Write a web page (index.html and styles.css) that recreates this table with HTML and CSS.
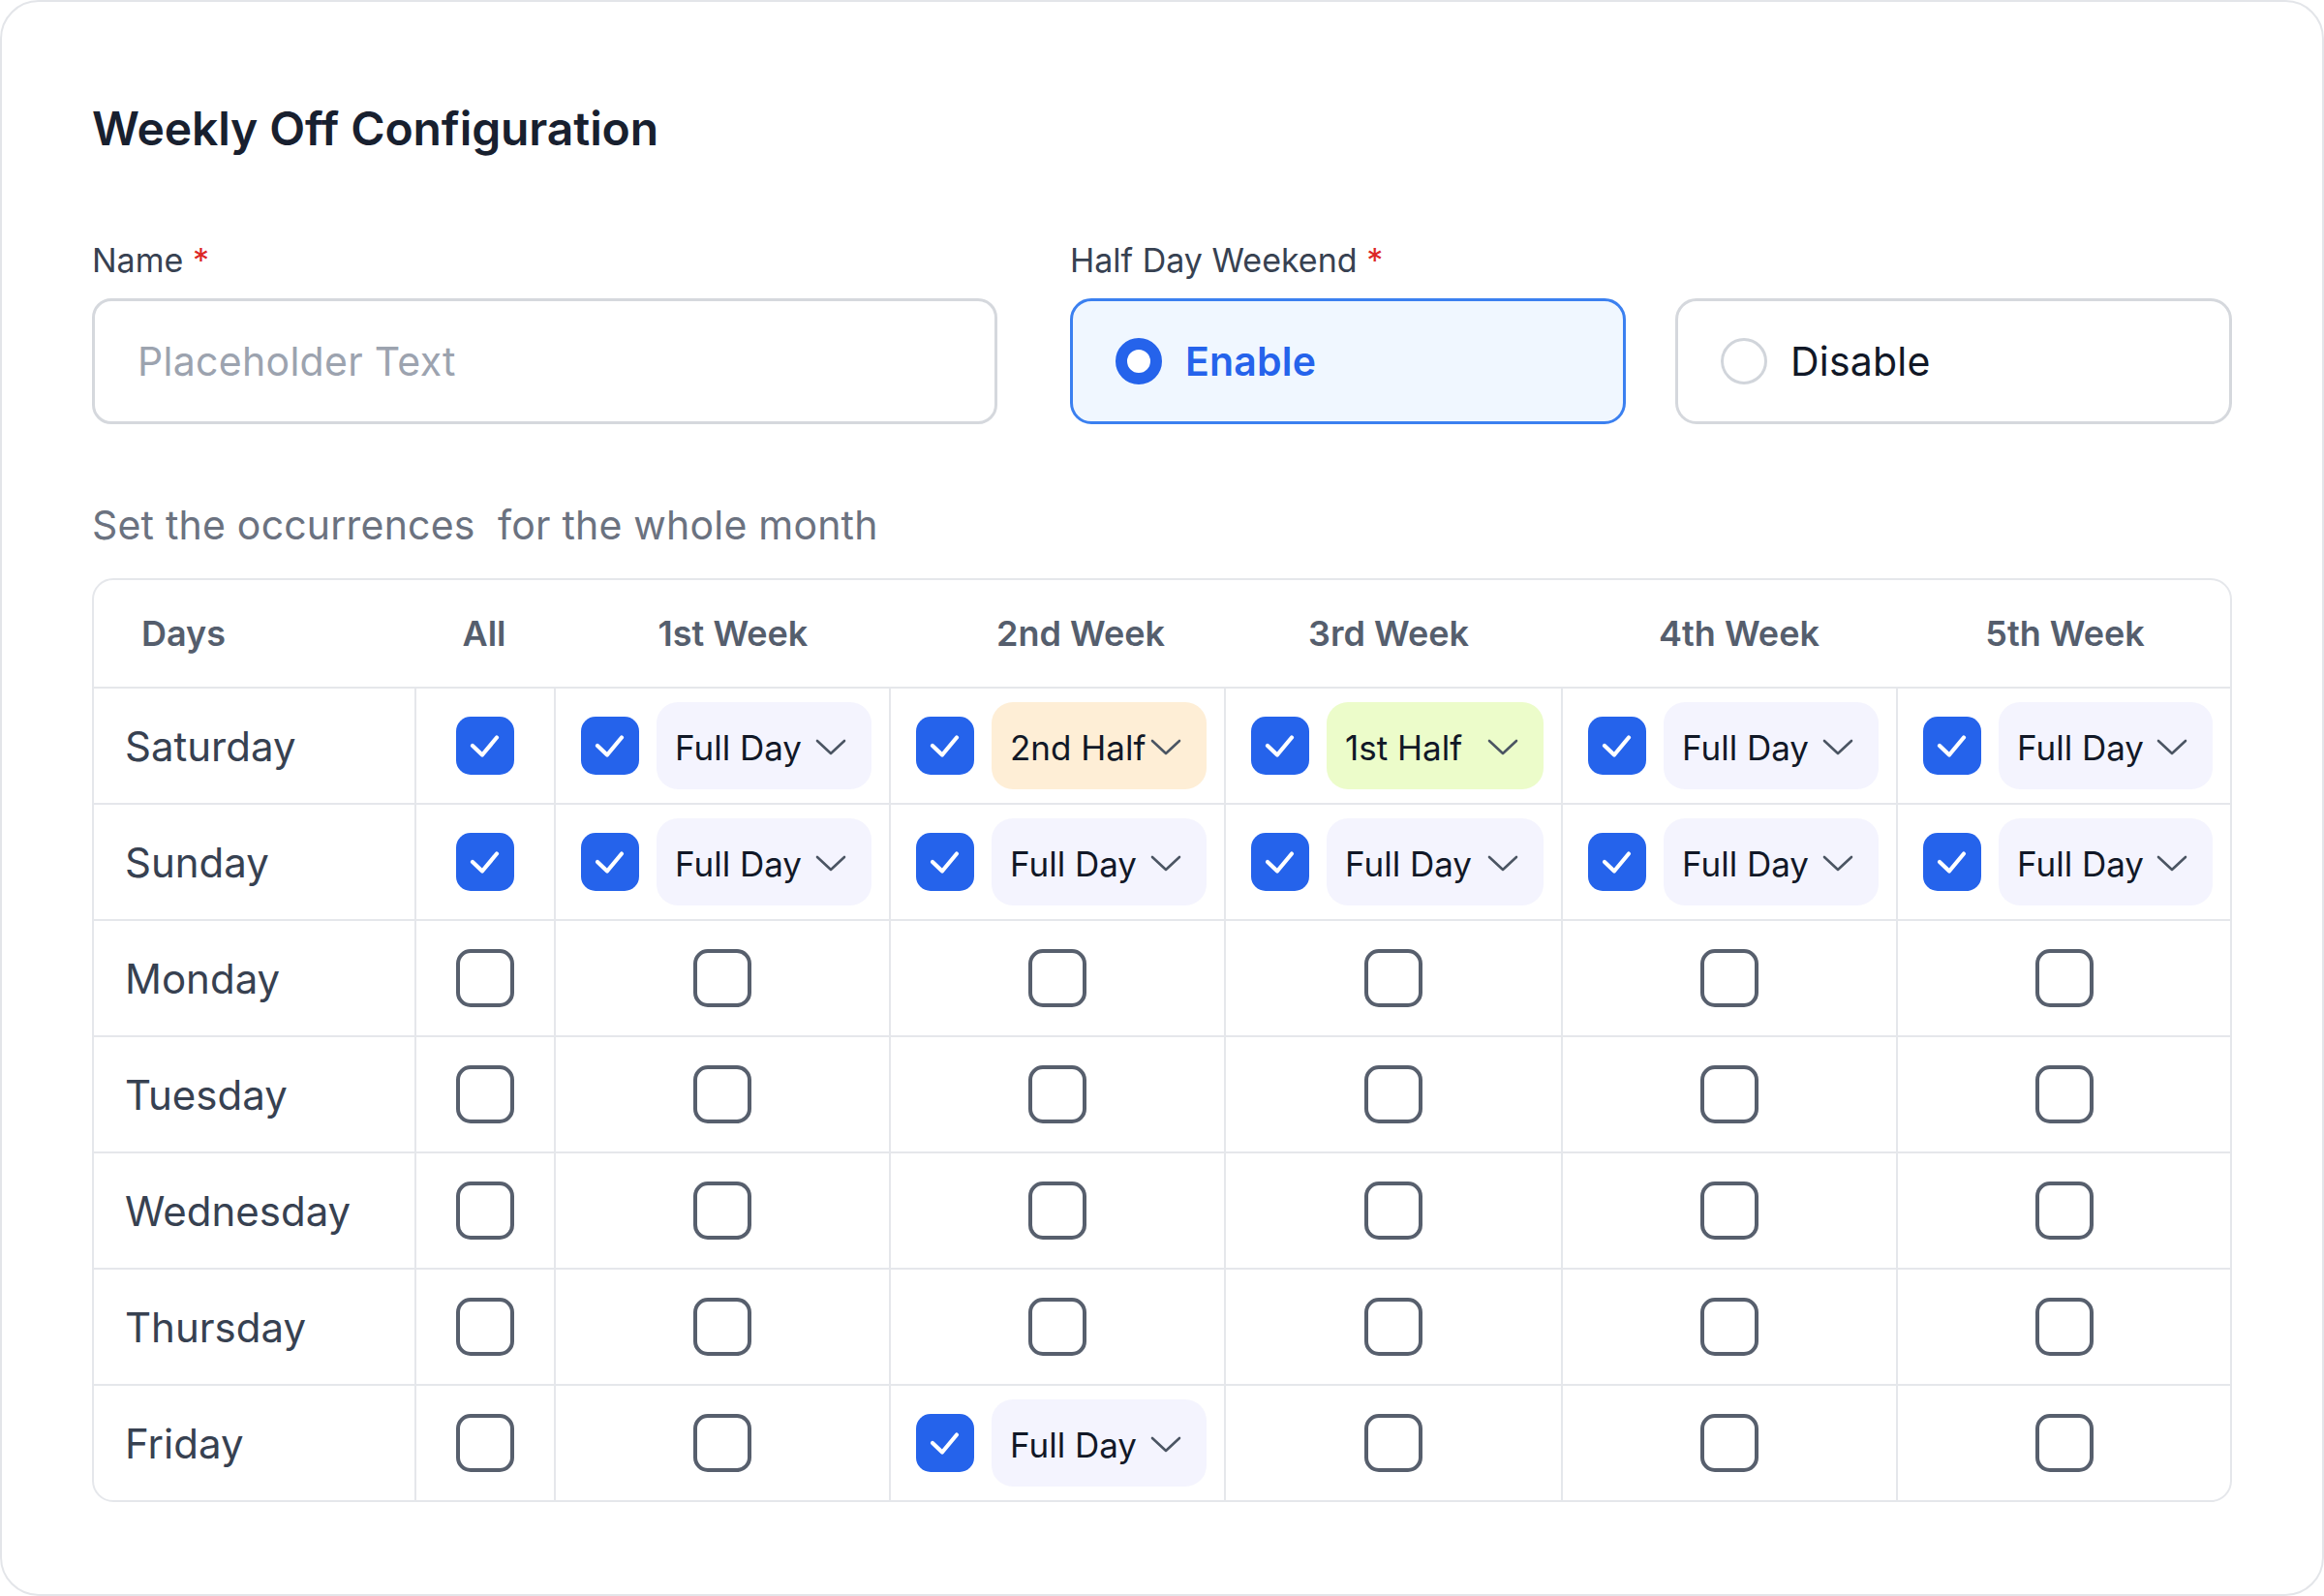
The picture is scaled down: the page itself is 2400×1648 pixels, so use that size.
FILE: index.html
```html
<!DOCTYPE html>
<html lang="en">
<head>
<meta charset="utf-8">
<title>Weekly Off Configuration</title>
<link rel="stylesheet" href="styles.css">
</head>
<body>
<div class="card">
  <h1 class="title">Weekly Off Configuration</h1>

  <div class="form-row">
    <div class="field">
      <div class="label">Name <span class="req">*</span></div>
      <input class="input" type="text" placeholder="Placeholder Text">
    </div>
    <div class="field">
      <div class="label">Half Day Weekend <span class="req">*</span></div>
      <div class="radios">
        <label class="radio-box selected"><span class="radio on"></span><span class="radio-text">Enable</span></label>
        <label class="radio-box"><span class="radio"></span><span class="radio-text">Disable</span></label>
      </div>
    </div>
  </div>

  <p class="hint">Set the occurrences&nbsp; for the whole month</p>

  <div class="table">
    <div class="thead">
      <div class="th th-days">Days</div>
      <div class="th">All</div>
      <div class="th th-w1">1st Week</div>
      <div class="th th-w2">2nd Week</div>
      <div class="th th-w3">3rd Week</div>
      <div class="th th-w4">4th Week</div>
      <div class="th th-w5">5th Week</div>
    </div>

    <div class="tr">
      <div class="td day">Saturday</div>
      <div class="td center"><span class="cb checked"><svg viewBox="0 0 60 60"><path d="M17 30 L27 39.5 L42 21.5"/></svg></span></div>
      <div class="td week"><span class="cb checked"><svg viewBox="0 0 60 60"><path d="M17 30 L27 39.5 L42 21.5"/></svg></span><span class="pill"><span>Full Day</span><svg class="chev" viewBox="0 0 32 18"><path d="M2 2 L16 15 L30 2"/></svg></span></div>
      <div class="td week"><span class="cb checked"><svg viewBox="0 0 60 60"><path d="M17 30 L27 39.5 L42 21.5"/></svg></span><span class="pill peach"><span>2nd Half</span><svg class="chev" viewBox="0 0 32 18"><path d="M2 2 L16 15 L30 2"/></svg></span></div>
      <div class="td week"><span class="cb checked"><svg viewBox="0 0 60 60"><path d="M17 30 L27 39.5 L42 21.5"/></svg></span><span class="pill lime"><span>1st Half</span><svg class="chev" viewBox="0 0 32 18"><path d="M2 2 L16 15 L30 2"/></svg></span></div>
      <div class="td week"><span class="cb checked"><svg viewBox="0 0 60 60"><path d="M17 30 L27 39.5 L42 21.5"/></svg></span><span class="pill"><span>Full Day</span><svg class="chev" viewBox="0 0 32 18"><path d="M2 2 L16 15 L30 2"/></svg></span></div>
      <div class="td week"><span class="cb checked"><svg viewBox="0 0 60 60"><path d="M17 30 L27 39.5 L42 21.5"/></svg></span><span class="pill"><span>Full Day</span><svg class="chev" viewBox="0 0 32 18"><path d="M2 2 L16 15 L30 2"/></svg></span></div>
    </div>

    <div class="tr">
      <div class="td day">Sunday</div>
      <div class="td center"><span class="cb checked"><svg viewBox="0 0 60 60"><path d="M17 30 L27 39.5 L42 21.5"/></svg></span></div>
      <div class="td week"><span class="cb checked"><svg viewBox="0 0 60 60"><path d="M17 30 L27 39.5 L42 21.5"/></svg></span><span class="pill"><span>Full Day</span><svg class="chev" viewBox="0 0 32 18"><path d="M2 2 L16 15 L30 2"/></svg></span></div>
      <div class="td week"><span class="cb checked"><svg viewBox="0 0 60 60"><path d="M17 30 L27 39.5 L42 21.5"/></svg></span><span class="pill"><span>Full Day</span><svg class="chev" viewBox="0 0 32 18"><path d="M2 2 L16 15 L30 2"/></svg></span></div>
      <div class="td week"><span class="cb checked"><svg viewBox="0 0 60 60"><path d="M17 30 L27 39.5 L42 21.5"/></svg></span><span class="pill"><span>Full Day</span><svg class="chev" viewBox="0 0 32 18"><path d="M2 2 L16 15 L30 2"/></svg></span></div>
      <div class="td week"><span class="cb checked"><svg viewBox="0 0 60 60"><path d="M17 30 L27 39.5 L42 21.5"/></svg></span><span class="pill"><span>Full Day</span><svg class="chev" viewBox="0 0 32 18"><path d="M2 2 L16 15 L30 2"/></svg></span></div>
      <div class="td week"><span class="cb checked"><svg viewBox="0 0 60 60"><path d="M17 30 L27 39.5 L42 21.5"/></svg></span><span class="pill"><span>Full Day</span><svg class="chev" viewBox="0 0 32 18"><path d="M2 2 L16 15 L30 2"/></svg></span></div>
    </div>

    <div class="tr">
      <div class="td day">Monday</div>
      <div class="td center"><span class="cb"></span></div>
      <div class="td center"><span class="cb"></span></div>
      <div class="td center"><span class="cb"></span></div>
      <div class="td center"><span class="cb"></span></div>
      <div class="td center"><span class="cb"></span></div>
      <div class="td center"><span class="cb"></span></div>
    </div>

    <div class="tr">
      <div class="td day">Tuesday</div>
      <div class="td center"><span class="cb"></span></div>
      <div class="td center"><span class="cb"></span></div>
      <div class="td center"><span class="cb"></span></div>
      <div class="td center"><span class="cb"></span></div>
      <div class="td center"><span class="cb"></span></div>
      <div class="td center"><span class="cb"></span></div>
    </div>

    <div class="tr">
      <div class="td day">Wednesday</div>
      <div class="td center"><span class="cb"></span></div>
      <div class="td center"><span class="cb"></span></div>
      <div class="td center"><span class="cb"></span></div>
      <div class="td center"><span class="cb"></span></div>
      <div class="td center"><span class="cb"></span></div>
      <div class="td center"><span class="cb"></span></div>
    </div>

    <div class="tr">
      <div class="td day">Thursday</div>
      <div class="td center"><span class="cb"></span></div>
      <div class="td center"><span class="cb"></span></div>
      <div class="td center"><span class="cb"></span></div>
      <div class="td center"><span class="cb"></span></div>
      <div class="td center"><span class="cb"></span></div>
      <div class="td center"><span class="cb"></span></div>
    </div>

    <div class="tr">
      <div class="td day">Friday</div>
      <div class="td center"><span class="cb"></span></div>
      <div class="td center"><span class="cb"></span></div>
      <div class="td week"><span class="cb checked"><svg viewBox="0 0 60 60"><path d="M17 30 L27 39.5 L42 21.5"/></svg></span><span class="pill"><span>Full Day</span><svg class="chev" viewBox="0 0 32 18"><path d="M2 2 L16 15 L30 2"/></svg></span></div>
      <div class="td center"><span class="cb"></span></div>
      <div class="td center"><span class="cb"></span></div>
      <div class="td center"><span class="cb"></span></div>
    </div>
  </div>
</div>
</body>
</html>
```

FILE: styles.css
```css
* { box-sizing: border-box; }

html, body {
  margin: 0;
  padding: 0;
  background: #ffffff;
}

body {
  font-family: Inter, "Noto Sans", "Liberation Sans", sans-serif;
  color: #111827;
}

.card {
  width: 2400px;
  height: 1648px;
  border: 2px solid #e3e5e9;
  border-radius: 40px;
  background: #ffffff;
  padding: 103px 93px 0 93px;
}

.title {
  margin: 0;
  font-size: 48px;
  line-height: 56px;
  font-weight: 600;
  color: #18202f;
  letter-spacing: -0.1px;
}

.form-row {
  margin-top: 87px;
  display: grid;
  grid-template-columns: 935px 1200px;
  column-gap: 75px;
}

.label {
  font-size: 34px;
  line-height: 42px;
  color: #374151;
  margin-bottom: 18px;
}

.req {
  color: #dc2626;
}

.input {
  display: block;
  width: 100%;
  height: 130px;
  border: 3px solid #d5d8dd;
  border-radius: 20px;
  padding: 0 0 0 44px;
  font-family: inherit;
  font-size: 41px;
  letter-spacing: 0.3px;
  color: #111827;
  background: #ffffff;
  outline: none;
}

.input::placeholder {
  color: #9ca3af;
}

.radios {
  display: grid;
  grid-template-columns: 574px 575px;
  column-gap: 51px;
}

.radio-box {
  height: 130px;
  display: flex;
  align-items: center;
  border: 3px solid #d5d8dd;
  border-radius: 22px;
  padding-left: 44px;
  background: #ffffff;
}

.radio-box.selected {
  border-color: #3b80f0;
  background: #f0f7ff;
}

.radio {
  width: 48px;
  height: 48px;
  border-radius: 50%;
  border: 3px solid #d1d5db;
  background: #ffffff;
  flex: none;
}

.radio.on {
  border: 12px solid #2563eb;
}

.radio-text {
  margin-left: 24px;
  font-size: 41px;
  line-height: 48px;
  letter-spacing: 0.2px;
  color: #111827;
}

.selected .radio-text {
  color: #2563eb;
  font-weight: 600;
}

.hint {
  margin: 80px 0 31px 0;
  font-size: 41px;
  line-height: 48px;
  letter-spacing: 0.2px;
  color: #6b7280;
}

.table {
  width: 2210px;
  border: 2px solid #e5e7eb;
  border-radius: 22px;
  overflow: hidden;
}

.thead,
.tr {
  display: grid;
  grid-template-columns: 331px 144px 346px 346px 348px 346px 345px;
}

.thead {
  height: 110px;
}

.th {
  display: flex;
  align-items: center;
  justify-content: center;
  font-size: 36px;
  font-weight: 600;
  color: #555e6d;
}

.th-days { justify-content: flex-start; padding-left: 49px; }
.th-w1 { padding-left: 24px; }
.th-w2 { padding-left: 50px; }
.th-w3 { padding-right: 8px; }
.th-w4 { padding-left: 22px; }
.th-w5 { padding-left: 4px; }

.tr {
  height: 120px;
  border-top: 2px solid #e5e7eb;
}

.td {
  display: flex;
  align-items: center;
  border-left: 2px solid #e5e7eb;
}

.td.day {
  border-left: none;
  padding-left: 32px;
  font-size: 42px;
  letter-spacing: 0;
  color: #374151;
}

.td.center {
  justify-content: center;
}

.td.week {
  padding-left: 26px;
  padding-right: 18px;
}

.cb {
  width: 60px;
  height: 60px;
  flex: none;
  border: 4px solid #575f6d;
  border-radius: 15px;
  background: #ffffff;
}

.cb.checked {
  border: none;
  background: #2563eb;
}

.cb svg {
  display: block;
  width: 60px;
  height: 60px;
  fill: none;
  stroke: #ffffff;
  stroke-width: 4.2;
  stroke-linecap: round;
  stroke-linejoin: round;
}

.pill {
  margin-left: 18px;
  flex: 1;
  height: 90px;
  border-radius: 22px;
  background: #f4f4fe;
  display: flex;
  align-items: center;
  justify-content: space-between;
  padding: 4px 26px 0 19px;
  font-size: 35px;
  color: #111827;
  white-space: nowrap;
}

.pill.peach { background: #feeed6; }
.pill.lime { background: #ecfcca; }

.chev {
  width: 32px;
  height: 18px;
  flex: none;
  fill: none;
  stroke: #4b5563;
  stroke-width: 2.6;
  stroke-linecap: round;
  stroke-linejoin: round;
}
```
